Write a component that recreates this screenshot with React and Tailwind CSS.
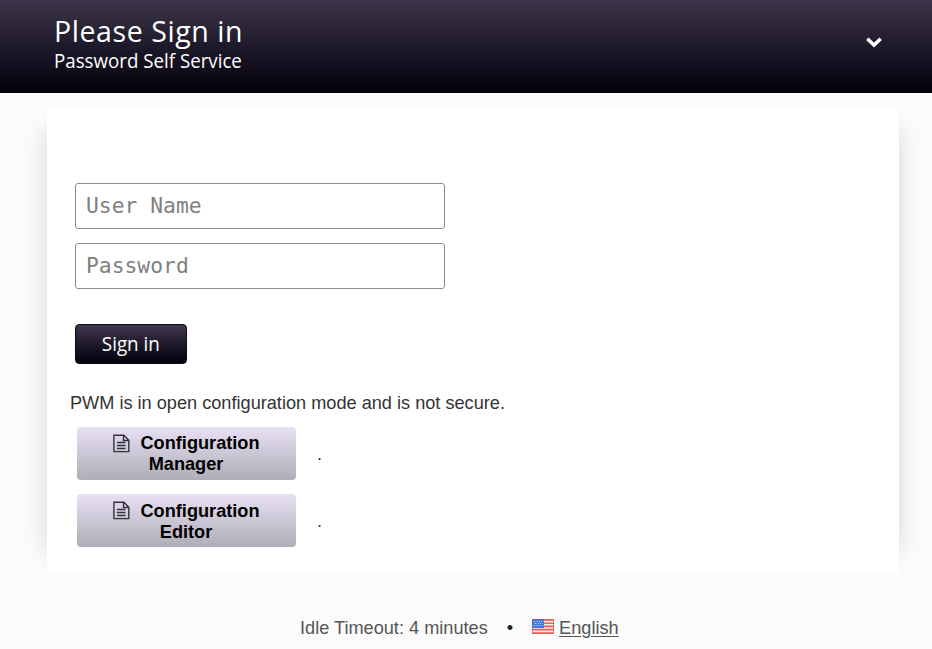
function FileIcon() {
  return (
    <svg width="17" height="19" viewBox="0 0 17 19" fill="none" stroke="#35323c" strokeWidth="1.4" className="mt-[7px] shrink-0">
      <path d="M.9 1.2H10.9L15.8 6.2V17.6H.9Z M10.5 1.2V6.5H15.8" />
      <path d="M4 8.5H12.5M4 11.5H12.5M4 14.5H12.5" />
    </svg>
  );
}

function ConfigRow({ second, textTop }) {
  return (
    <div className="flex h-[53px]">
      <button className="flex w-[219px] justify-center gap-[11px] rounded bg-linear-to-b from-[#e8e1f5] to-[#afadb6] pr-px text-[18.16px] leading-[21px] font-bold text-black">
        <FileIcon />
        <span className={"w-[119px] whitespace-nowrap " + textTop}>
          <span className="block">Configuration</span>
          <span className="-ml-[28px] block">{second}</span>
        </span>
      </button>
      <span className="mt-[16px] ml-[21px] text-[18px] leading-[22px]">.</span>
    </div>
  );
}

function Flag() {
  return (
    <svg width="22" height="15" viewBox="0 0 22 15" className="mr-[5px] mb-[3px]">
      <rect width="22" height="15" fill="#fbe9e4" />
      <path d="M0 1H22M0 4.2H22M0 7.4H22M0 10.6H22M0 14H22" stroke="#ee6259" strokeWidth="1.6" />
      <rect width="12" height="9" fill="#4278dd" />
      <path d="M2 2.5H11M3 4.5H11M2 6.5H11" stroke="#c9dcfc" strokeDasharray="1 1.5" />
      <rect x=".5" y=".5" width="21" height="14" fill="none" stroke="#b64a38" strokeOpacity=".5" />
    </svg>
  );
}

export default function App() {
  const field =
    "block h-[46px] w-[370px] rounded-[3px] border border-[#8c8a98] bg-white px-[10px] pb-[2px] font-['DejaVu_Sans_Mono','Liberation_Mono',monospace] text-[21.33px] outline-none placeholder:text-[#808080]";
  return (
    <div className="h-[649px] overflow-hidden bg-[#fbfbfb] font-['Liberation_Sans',Arial,sans-serif] text-[#333]">
      <header className="flex h-[93px] justify-between bg-linear-to-b from-[#3d364a] to-[#05030d] pr-[49px] pl-[54px] font-['Open_Sans','Noto_Sans',sans-serif] text-white">
        <div className="pt-[17px] whitespace-nowrap">
          <h1 className="text-[28.5px] leading-[29px] tracking-[0.58px]">Please Sign in</h1>
          <div className="mt-[5px] w-fit origin-left scale-x-[0.936] text-[20px] leading-[20px]">Password Self Service</div>
        </div>
        <svg width="18" height="12" viewBox="0 0 18 12" className="mt-[36px]">
          <path d="M2.3 2.7L9 9L15.7 2.7" fill="none" stroke="white" strokeWidth="3.6" strokeLinecap="butt" />
        </svg>
      </header>
      <main className="mt-[15px] ml-[47px] h-[466px] w-[852px] rounded-[5px] bg-white pt-[75px] pl-[28px] shadow-[-22px_0_22px_-22px_rgba(0,0,0,0.15),22px_0_22px_-22px_rgba(0,0,0,0.15)]">
        <input className={field} placeholder="User Name" />
        <input className={field + " mt-[14px]"} type="password" placeholder="Password" />
        <button className="mt-[35px] block h-[40px] w-[112px] rounded border border-[#0c0914] bg-linear-to-b from-[#40384e] to-[#05030d] font-['Open_Sans','Noto_Sans',sans-serif] text-[20px] leading-[38px] text-white">
          <span className="inline-block scale-x-[0.94]">Sign in</span>
        </button>
        <p className="mt-[28px] -ml-[5px] text-[18.16px] leading-[22px]">PWM is in open configuration mode and is not secure.</p>
        <div className="mt-[13px] ml-[2px] flex flex-col gap-[14px]">
          <ConfigRow second="Manager" textTop="pt-[6px]" />
          <ConfigRow second="Editor" textTop="pt-[7px]" />
        </div>
      </main>
      <footer className="mt-[43px] ml-[300px] flex h-[22px] items-center text-[18.16px] leading-[22px] text-[#555]">
        <span>Idle Timeout: 4 minutes</span>
        <span className="mr-[19px] ml-[19px] text-[#222]">•</span>
        <Flag />
        <a className="underline underline-offset-[2px]">English</a>
      </footer>
    </div>
  );
}
